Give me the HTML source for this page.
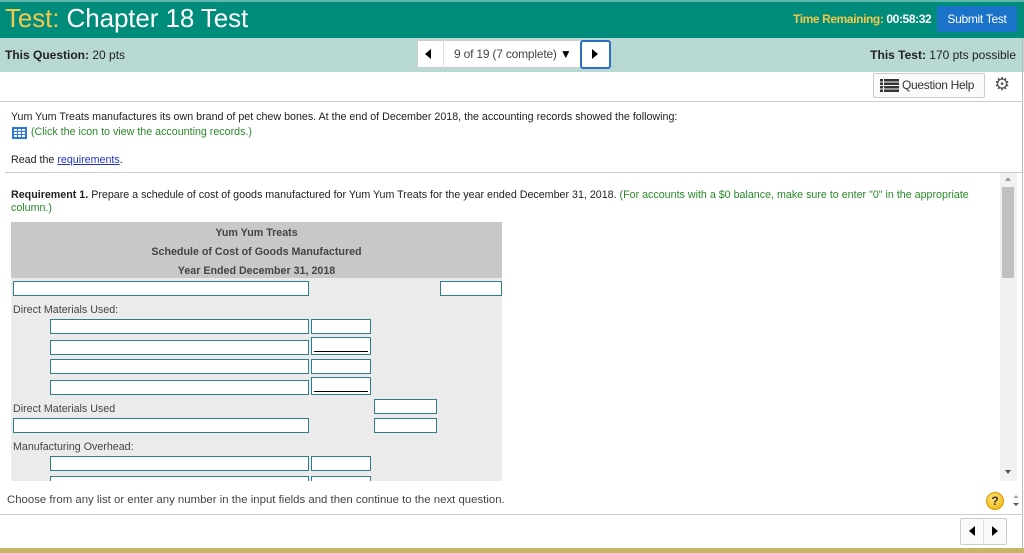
<!DOCTYPE html>
<html><head><style>
*{box-sizing:border-box;margin:0;padding:0}
body{width:1024px;height:553px;overflow:hidden;background:#fff;font-family:"Liberation Sans",Arial,sans-serif;position:relative;color:#222}
.a{position:absolute}
.in{position:absolute;background:#fff;border:1px solid #2f7d8f;height:15px}
.t{font-size:11px;white-space:nowrap}
</style></head><body>
<div class="a" style="left:0;top:0;width:1024px;height:38px;background:#008c7a;border-top:2px solid #5fb8ad"></div>
<div class="a" style="left:5px;top:3px;font-size:26px;color:#fff;letter-spacing:-0.1px"><span style="color:#f2c94c">Test:</span> Chapter 18 Test</div>
<div class="a t" style="left:793px;top:12px;font-size:12px;color:#f2c94c;font-weight:bold;letter-spacing:-0.4px">Time Remaining: <span style="color:#fff">00:58:32</span></div>
<div class="a" style="left:937px;top:6px;width:80px;height:26px;background:#1a73c9;color:#fff;font-size:12px;text-align:center;line-height:26px;letter-spacing:-0.3px">Submit Test</div>
<div class="a" style="left:0;top:38px;width:1024px;height:34px;background:#b8d9d3"></div>
<div class="a t" style="left:5px;top:48px;font-size:12px"><b>This Question:</b> 20 pts</div>
<div class="a t" style="right:8px;top:48px;font-size:12px"><b>This Test:</b> 170 pts possible</div>
<div class="a" style="left:417px;top:40px;width:194px;height:28px;background:#fff;border:1px solid #ccc"></div>
<div class="a" style="left:425px;top:49px;width:0;height:0;border-top:5px solid transparent;border-bottom:5px solid transparent;border-right:6px solid #000"></div>
<div class="a" style="left:443px;top:40px;width:1px;height:28px;background:#ddd"></div>
<div class="a t" style="left:454px;top:47px;font-size:12px;color:#444;letter-spacing:-0.2px">9 of 19 (7 complete) <span style="color:#000">▼</span></div>
<div class="a" style="left:580px;top:40px;width:31px;height:29px;border:2px solid #2a6fc2;border-radius:3px;background:#fff"></div>
<div class="a" style="left:592px;top:49px;width:0;height:0;border-top:5px solid transparent;border-bottom:5px solid transparent;border-left:6px solid #000"></div>
<div class="a" style="left:873px;top:73px;width:112px;height:25px;border:1px solid #ccc;border-radius:2px;background:#fafafa"></div>
<svg class="a" style="left:880px;top:79px" width="20" height="13"><g fill="#333"><rect x="0" y="0" width="3" height="2.5"/><rect x="4" y="0" width="15" height="2.5"/><rect x="0" y="3.5" width="3" height="2.5"/><rect x="4" y="3.5" width="15" height="2.5"/><rect x="0" y="7" width="3" height="2.5"/><rect x="4" y="7" width="15" height="2.5"/><rect x="0" y="10.5" width="3" height="2.5"/><rect x="4" y="10.5" width="15" height="2.5"/></g></svg>
<div class="a t" style="left:902px;top:78px;font-size:12px;color:#333;letter-spacing:-0.3px">Question Help</div>
<div class="a" style="left:994px;top:74px;font-size:18px;color:#555">⚙</div>
<div class="a" style="left:0;top:101px;width:1022px;height:1px;background:#ccc"></div>
<div class="a t" style="left:11px;top:111px;font-size:10.7px">Yum Yum Treats manufactures its own brand of pet chew bones. At the end of December 2018, the accounting records showed the following:</div>
<svg class="a" style="left:12px;top:127px" width="15" height="12"><rect width="15" height="12" fill="#2b7bd6"/><g fill="#fff"><rect x="2" y="2" width="3" height="2"/><rect x="6" y="2" width="3" height="2"/><rect x="10" y="2" width="3" height="2"/><rect x="2" y="5" width="3" height="2"/><rect x="6" y="5" width="3" height="2"/><rect x="10" y="5" width="3" height="2"/><rect x="2" y="8" width="3" height="2"/><rect x="6" y="8" width="3" height="2"/><rect x="10" y="8" width="3" height="2"/></g></svg>
<div class="a t" style="left:31px;top:126px;font-size:10.7px;color:#2a8a2a">(Click the icon to view the accounting records.)</div>
<div class="a t" style="left:11px;top:154px;font-size:10.7px">Read the <span style="color:#2233cc;text-decoration:underline">requirements</span>.</div>
<div class="a" style="left:5px;top:172px;width:1017px;height:1px;background:#ccc"></div>
<div class="a t" style="left:11px;top:189px;font-size:10.7px"><b>Requirement 1.</b> Prepare a schedule of cost of goods manufactured for Yum Yum Treats for the year ended December 31, 2018. <span style="color:#2a8a2a">(For accounts with a $0 balance, make sure to enter "0" in the appropriate</span></div>
<div class="a t" style="left:11px;top:202px;font-size:10.7px;color:#2a8a2a">column.)</div>
<div class="a" style="left:11px;top:222px;width:491px;height:56px;background:#c8c8c8"></div>
<div class="a" style="left:11px;top:278px;width:491px;height:203px;background:#ebebeb"></div>
<div class="a t" style="left:11px;top:224px;width:491px;text-align:center;font-size:10.7px;font-weight:bold;color:#444;line-height:19px">Yum Yum Treats<br>Schedule of Cost of Goods Manufactured<br>Year Ended December 31, 2018</div>
<div class="in" style="left:13px;top:281px;width:296px"></div>
<div class="in" style="left:440px;top:281px;width:62px"></div>
<div class="a t" style="left:13px;top:304px;font-size:10.7px;color:#444">Direct Materials Used:</div>
<div class="in" style="left:50px;top:319px;width:259px"></div><div class="in" style="left:311px;top:319px;width:60px"></div>
<div class="in" style="left:50px;top:340px;width:259px"></div><div class="in" style="left:311px;top:337px;width:60px;height:18px"><div style="position:absolute;left:2px;right:2px;bottom:2px;height:1px;background:#000"></div></div>
<div class="in" style="left:50px;top:359px;width:259px"></div><div class="in" style="left:311px;top:359px;width:60px"></div>
<div class="in" style="left:50px;top:380px;width:259px"></div><div class="in" style="left:311px;top:377px;width:60px;height:18px"><div style="position:absolute;left:2px;right:2px;bottom:2px;height:1px;background:#000"></div></div>
<div class="a t" style="left:13px;top:403px;font-size:10.7px;color:#444">Direct Materials Used</div>
<div class="in" style="left:374px;top:399px;width:63px"></div>
<div class="in" style="left:13px;top:418px;width:296px"></div>
<div class="in" style="left:374px;top:418px;width:63px"></div>
<div class="a t" style="left:13px;top:441px;font-size:10.7px;color:#444">Manufacturing Overhead:</div>
<div class="in" style="left:50px;top:456px;width:259px"></div><div class="in" style="left:311px;top:456px;width:60px"></div>
<div class="in" style="left:50px;top:476px;width:259px;height:5px;border-bottom:none"></div><div class="in" style="left:311px;top:476px;width:60px;height:5px;border-bottom:none"></div>
<div class="a" style="left:1000px;top:173px;width:17px;height:308px;background:#f1f1f1"></div>
<div class="a" style="left:1002px;top:187px;width:12px;height:91px;background:#c1c1c1"></div>
<div class="a" style="left:1005px;top:177px;border-left:3px solid transparent;border-right:3px solid transparent;border-bottom:4px solid #999"></div>
<div class="a" style="left:1005px;top:470px;border-left:3px solid transparent;border-right:3px solid transparent;border-top:4px solid #555"></div>
<div class="a t" style="left:7px;top:494px;font-size:11.4px;color:#444">Choose from any list or enter any number in the input fields and then continue to the next question.</div>
<div class="a" style="left:986px;top:492px;width:18px;height:18px;border-radius:50%;background:radial-gradient(circle at 40% 35%,#ffe27a,#f0b400);border:1px solid #d49b00;font-size:12px;font-weight:bold;text-align:center;line-height:16px;color:#333">?</div>
<div class="a" style="left:1013px;top:495px;border-left:3px solid transparent;border-right:3px solid transparent;border-bottom:3px solid #aaa"></div>
<div class="a" style="left:1013px;top:503px;border-left:3px solid transparent;border-right:3px solid transparent;border-top:3px solid #555"></div>
<div class="a" style="left:0;top:514px;width:1022px;height:1px;background:#ccc"></div>
<div class="a" style="left:960px;top:518px;width:47px;height:27px;border:1px solid #ccc;border-radius:2px;background:#fafafa"></div>
<div class="a" style="left:983px;top:518px;width:1px;height:27px;background:#ddd"></div>
<div class="a" style="left:969px;top:526px;border-top:5px solid transparent;border-bottom:5px solid transparent;border-right:6px solid #000"></div>
<div class="a" style="left:992px;top:526px;border-top:5px solid transparent;border-bottom:5px solid transparent;border-left:6px solid #000"></div>
<div class="a" style="left:1022px;top:38px;width:1px;height:510px;background:#bbb"></div>
<div class="a" style="left:0;top:548px;width:1024px;height:5px;background:#c9b46a"></div>
</body></html>
